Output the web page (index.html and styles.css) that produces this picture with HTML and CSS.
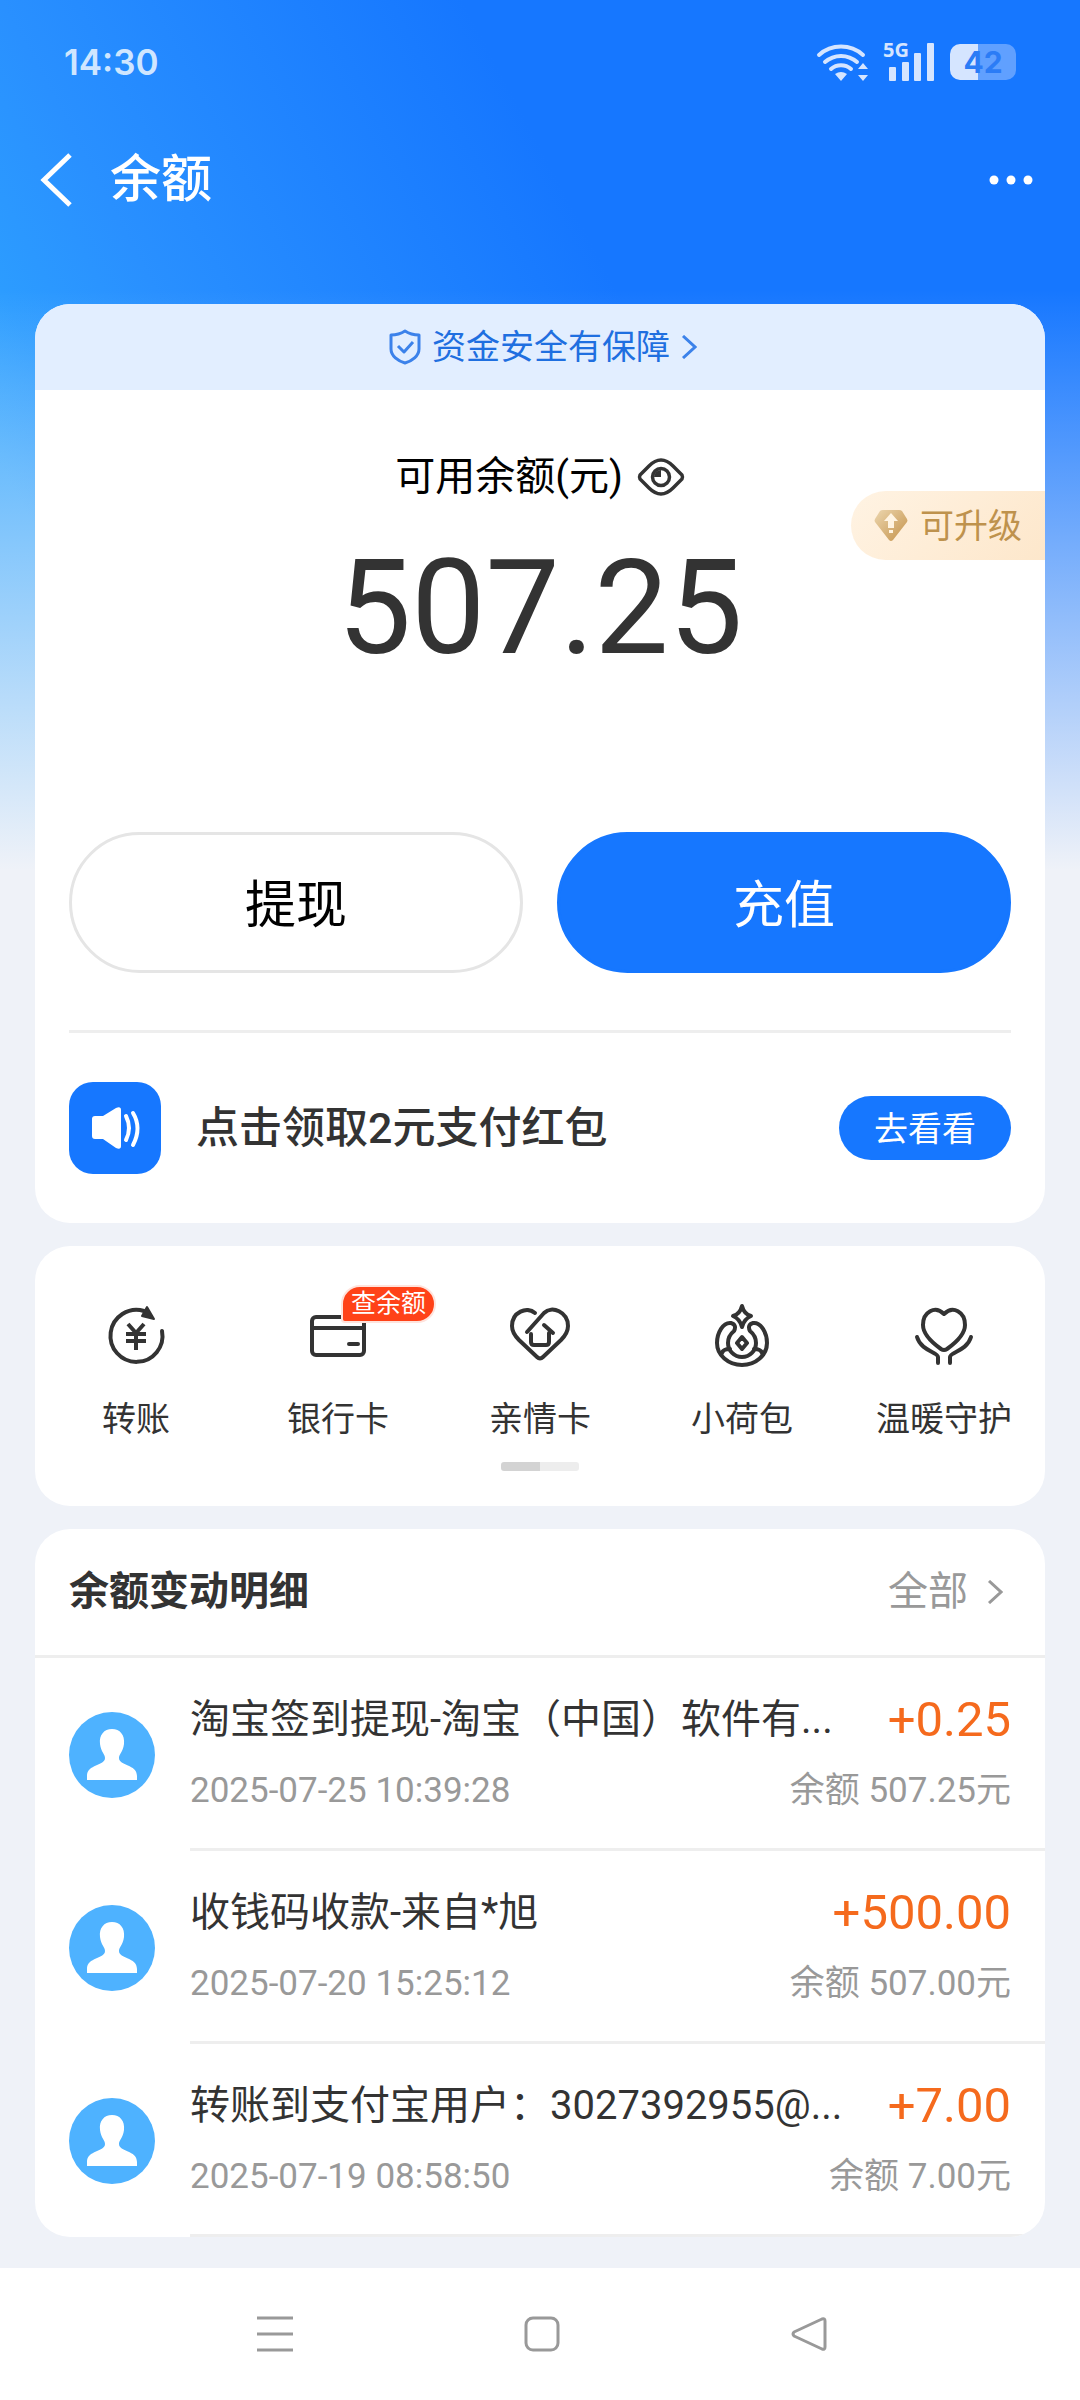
FILE: index.html
```html
<!DOCTYPE html>
<html lang="zh-CN">
<head>
<meta charset="utf-8">
<meta name="viewport" content="width=device-width, initial-scale=1">
<title>余额</title>
<link rel="stylesheet" href="styles.css">
</head>
<body>
<div class="page">
  <div class="status-bar">
    <span class="status-time">14:30</span>
    <div class="status-icons">
      <svg class="wifi" viewBox="0 0 52 40" fill="none" stroke="#d5e5ff" stroke-width="4" stroke-linecap="round" aria-label="Wi-Fi">
        <path d="M3 13a33 33 0 0 1 44 0M9 20a24 24 0 0 1 32 0M15 27a15 15 0 0 1 20 0"/>
        <path d="M19 32q6-4 12 0l-6 7zM42 27l5-6 5 6zM42 33h10l-5 6z" fill="#d5e5ff" stroke="none"/>
      </svg>
      <div class="signal">
        <span class="network">5G</span>
        <svg viewBox="0 0 52 40" fill="#d5e5ff" aria-label="信号">
          <rect x="6" y="25" width="7" height="14" rx="1"/><rect x="19" y="20" width="7" height="19" rx="1"/><rect x="31" y="11" width="7" height="28" rx="1"/><rect x="44" y="1" width="7" height="38" rx="1"/>
        </svg>
      </div>
      <div class="battery"><span>42</span></div>
    </div>
  </div>

  <header class="title-bar">
    <button class="icon-button" type="button" aria-label="返回">
      <svg width="32" height="54" viewBox="0 0 32 54" fill="none" stroke="#fff" stroke-width="5"><path d="M30 2L4 27l26 25"/></svg>
    </button>
    <h1>余额</h1>
    <button class="icon-button more" type="button" aria-label="更多">
      <svg width="44" height="10" viewBox="0 0 44 10" fill="#fff"><circle cx="5" cy="5" r="4.5"/><circle cx="22" cy="5" r="4.5"/><circle cx="39" cy="5" r="4.5"/></svg>
    </button>
  </header>

  <main>
    <section class="card balance-card">
      <a class="safety" href="#">
        <svg width="32" height="36" viewBox="0 0 32 36" fill="none" stroke="#3c82ea" stroke-width="3" stroke-linejoin="round"><path d="M16 2q6 4 14 4v14c0 7-7 12-14 14C9 32 2 27 2 20V6q8 0 14-4z"/><path d="M9 17l6 6 9-10"/></svg>
        <span>资金安全有保障</span>
        <svg width="16" height="24" viewBox="0 0 16 24" fill="none" stroke="#3c82ea" stroke-width="3"><path d="M2 1l12 11L2 23"/></svg>
      </a>
      <div class="balance">
        <div class="balance-label">
          <span>可用余额(元)</span>
          <button class="icon-button" type="button" aria-label="隐藏余额">
            <svg width="48" height="38" viewBox="0 0 48 38" fill="none" stroke="#333" stroke-width="3.5"><path d="M3 17L12 8Q18 2 24 2t12 6l9 9q1 2 0 4l-9 9q-6 6-12 6t-12-6l-9-9q-1-2 0-4z"/><circle cx="24" cy="19" r="8.500"/><path d="M24 12v7h-7a7 7 0 0 1 7-7z" fill="#333" stroke="none"/></svg>
          </button>
        </div>
        <strong class="balance-amount">507.25</strong>
        <a class="upgrade" href="#">
          <svg width="34" height="33" viewBox="0 0 34 33"><defs><linearGradient id="gem" x1="0" y1="0" x2="1" y2="1"><stop offset="0" stop-color="#ecd6ae"/><stop offset="1" stop-color="#c4924a"/></linearGradient></defs><path d="M9 1h16q2 0 3 1l5 8q1 2 0 3L19 31q-2 2-4 0L1 13q-1-1 0-3l5-8q1-1 3-1z" fill="url(#gem)"/><path d="M17 4l7 8h-4v7h-6v-7h-4zM15 21h4v3h-4z" fill="#fff4e2"/></svg>
          <span>可升级</span>
        </a>
      </div>
      <div class="actions">
        <button class="action" type="button">提现</button>
        <button class="action primary" type="button">充值</button>
      </div>
      <div class="promo">
        <span class="promo-icon">
          <svg width="92" height="92" viewBox="0 0 92 92"><path d="M26 34h8l13-8q5-2 5 2v36q0 4-5 2l-13-9h-8q-3 0-3-3V37q0-3 3-3z" fill="#fff"/><path d="M57 34q6 12 0 24M64 31q9 15 0 32" fill="none" stroke="#fff" stroke-width="4" stroke-linecap="round"/></svg>
        </span>
        <span class="promo-text">点击领取2元支付红包</span>
        <button class="promo-button" type="button">去看看</button>
      </div>
    </section>

    <section class="card services">
      <nav class="service-list" aria-label="服务">
        <a class="service" href="#">
          <svg viewBox="0 0 64 64"><path d="M40 8A26 26 0 1 0 58 28"/><path d="M43 4l7 12-12-3z" fill="#333" stroke-width="2"/><path d="M24 21l8 9 8-9M22 31h20M22 38h20M32 30v17" stroke-linecap="butt"/></svg>
          <span>转账</span>
        </a>
        <a class="service" href="#">
          <svg viewBox="0 0 64 64"><rect x="6" y="14" width="52" height="38" rx="4"/><path d="M6 25h52M43 41h9"/></svg>
          <span>银行卡</span>
          <em class="badge">查余额</em>
        </a>
        <a class="service" href="#">
          <svg viewBox="0 0 64 64"><path d="M27 10C19 3 4 9 4 23c0 6 3 10 7 14l18 17q3 3 6 0l18-17c4-4 7-8 7-14C60 9 44 2 36 10L19 29"/><path d="M36 22l9 8M23 31v8q0 3 3 3h12q3 0 3-3V30"/></svg>
          <span>亲情卡</span>
        </a>
        <a class="service" href="#">
          <svg viewBox="0 0 64 64"><path d="M32 3q2 8 9 10-7 3-9 11-2-8-9-11 7-2 9-10z"/><path d="M21 20c-8-1-14 10-14 20a25 22 0 0 0 50 0c0-10-6-21-14-20-4 1-5 4-3 8 5 4 6 8 6 12a14 14 0 0 1-28 0c0-4 1-8 6-12 2-4 1-7-3-8z"/><path d="M12 50q1-4 8-4M52 50q-1-4-8-4M32 34l5 6-5 6-5-6z"/></svg>
          <span>小荷包</span>
        </a>
        <a class="service" href="#">
          <svg viewBox="0 0 64 64"><path d="M32 11c-9-9-21-2-21 11 0 10 11 19 18 24q3 2 6 0c7-5 18-14 18-24C53 9 41 2 32 11z"/><path d="M5 34c4 14 21 15 21 20v6M59 34c-4 14-21 15-21 20v6"/></svg>
          <span>温暖守护</span>
        </a>
      </nav>
      <div class="pager"></div>
    </section>

    <section class="card records">
      <div class="records-head">
        <h2>余额变动明细</h2>
        <a class="all" href="#">全部
          <svg width="16" height="24" viewBox="0 0 16 24" fill="none" stroke="#999" stroke-width="3"><path d="M2 1l12 11L2 23"/></svg>
        </a>
      </div>
      <ul class="record-list">
        <li class="record">
          <svg class="avatar" viewBox="0 0 86 86"><circle cx="43" cy="43" r="43" fill="#4eb2ff"/><path d="M43 17c8 0 13 6 12 15-1 8-5 10-5 14 0 8 18 6 18 18v4H18v-4c0-12 18-10 18-18 0-4-4-6-5-14-1-9 4-15 12-15z" fill="#fff"/></svg>
          <div class="record-body">
            <div class="record-line"><span class="record-name">淘宝签到提现-淘宝（中国）软件有...</span><span class="record-amount">+0.25</span></div>
            <div class="record-line meta"><time>2025-07-25 10:39:28</time><span>余额 507.25元</span></div>
          </div>
        </li>
        <li class="record">
          <svg class="avatar" viewBox="0 0 86 86"><circle cx="43" cy="43" r="43" fill="#4eb2ff"/><path d="M43 17c8 0 13 6 12 15-1 8-5 10-5 14 0 8 18 6 18 18v4H18v-4c0-12 18-10 18-18 0-4-4-6-5-14-1-9 4-15 12-15z" fill="#fff"/></svg>
          <div class="record-body">
            <div class="record-line"><span class="record-name">收钱码收款-来自*旭</span><span class="record-amount">+500.00</span></div>
            <div class="record-line meta"><time>2025-07-20 15:25:12</time><span>余额 507.00元</span></div>
          </div>
        </li>
        <li class="record">
          <svg class="avatar" viewBox="0 0 86 86"><circle cx="43" cy="43" r="43" fill="#4eb2ff"/><path d="M43 17c8 0 13 6 12 15-1 8-5 10-5 14 0 8 18 6 18 18v4H18v-4c0-12 18-10 18-18 0-4-4-6-5-14-1-9 4-15 12-15z" fill="#fff"/></svg>
          <div class="record-body">
            <div class="record-line"><span class="record-name">转账到支付宝用户：3027392955@...</span><span class="record-amount">+7.00</span></div>
            <div class="record-line meta"><time>2025-07-19 08:58:50</time><span>余额 7.00元</span></div>
          </div>
        </li>
      </ul>
    </section>
  </main>

  <nav class="system-nav" aria-label="系统导航">
    <button class="icon-button" type="button" aria-label="最近任务"><svg width="36" height="36" viewBox="0 0 36 36" fill="none" stroke="#999" stroke-width="3"><path d="M0 2h36M0 18h36M0 34h36"/></svg></button>
    <button class="icon-button" type="button" aria-label="主屏幕"><svg width="36" height="36" viewBox="0 0 36 36" fill="none" stroke="#999" stroke-width="3"><rect x="2" y="2" width="32" height="32" rx="7"/></svg></button>
    <button class="icon-button" type="button" aria-label="返回上一页"><svg width="36" height="36" viewBox="0 0 36 36" fill="none" stroke="#999" stroke-width="3" stroke-linejoin="round"><path d="M31 3L3 16q-2 2 0 4l28 13q3 1 3-2V5q0-3-3-2z"/></svg></button>
  </nav>
</div>
</body>
</html>
```
FILE: styles.css
```css
* {
  box-sizing: border-box;
}

body {
  margin: 0;
  background: #eff2f8;
  color: #333;
  font-family: Roboto, "Noto Sans CJK SC", sans-serif;
  font-size: 34px;
  line-height: 48px;
}

h1, h2, ul {
  margin: 0;
  padding: 0;
}

a {
  color: inherit;
  text-decoration: none;
}

button {
  margin: 0;
  padding: 0;
  border: 0;
  background: none;
  color: inherit;
  font: inherit;
  cursor: pointer;
}

svg {
  display: block;
  flex: none;
}

.icon-button {
  display: flex;
  align-items: center;
  justify-content: center;
}

.page {
  display: flex;
  flex-direction: column;
  min-height: 100vh;
  background-image:
    linear-gradient(to bottom, rgba(239, 242, 248, 0) 290px, #eff2f8 870px),
    linear-gradient(62deg, #34a6ff 14%, #2c9cff 20%, #2990ff 30%, #1677ff 60%);
  background-size: 100% 870px;
  background-repeat: no-repeat;
}

/* Status bar */

.status-bar {
  display: flex;
  align-items: center;
  justify-content: space-between;
  height: 124px;
  padding: 0 64px;
}

.status-time {
  color: #cfe6ff;
  font-family: Inter, sans-serif;
  font-size: 35px;
  font-weight: 600;
}

.status-icons {
  display: flex;
  align-items: center;
  gap: 15px;
}

.wifi {
  width: 52px;
  height: 40px;
}

.signal {
  position: relative;
}

.signal svg {
  width: 52px;
  height: 40px;
}

.network {
  position: absolute;
  left: 0;
  top: 0;
  color: #d5e5ff;
  font-family: "Noto Sans", sans-serif;
  font-size: 20px;
  font-weight: 700;
  line-height: 16px;
}

.battery {
  width: 66px;
  height: 36px;
  border-radius: 10px;
  background: linear-gradient(90deg, #d5e5ff 28px, #60a0ff 28px);
  color: #2b7cf6;
  font-family: Inter, sans-serif;
  font-size: 30px;
  font-weight: 700;
  line-height: 36px;
  text-align: center;
}

/* Title bar */

.title-bar {
  display: flex;
  align-items: center;
  height: 112px;
  margin-bottom: 68px;
  padding: 0 47px 0 40px;
  color: #fff;
}

.title-bar h1 {
  margin-left: 38px;
  font-size: 51px;
  font-weight: 500;
  line-height: 72px;
}

.more {
  margin-left: auto;
}

/* Cards */

main {
  display: flex;
  flex-direction: column;
  gap: 23px;
  padding: 0 35px 31px;
}

.card {
  overflow: hidden;
  border-radius: 35px;
  background: #fff;
}

.safety {
  display: flex;
  align-items: center;
  justify-content: center;
  gap: 11px;
  height: 86px;
  padding-left: 6px;
  background: #e2eeff;
  color: #1f6fe0;
}

.balance {
  position: relative;
  display: flex;
  flex-direction: column;
  align-items: center;
  height: 442px;
  padding-top: 59px;
}

.balance-label {
  display: flex;
  align-items: center;
  gap: 14px;
  color: #000;
  font-size: 40px;
  line-height: 56px;
}

.balance-amount {
  margin-top: 26px;
  font-size: 132px;
  font-weight: 400;
  line-height: 154px;
}

.upgrade {
  position: absolute;
  top: 101px;
  right: 0;
  display: flex;
  align-items: center;
  gap: 12px;
  height: 69px;
  padding: 0 23px;
  border-radius: 35px 0 0 35px;
  background: linear-gradient(135deg, #fff3e3, #fde7cb);
  color: #be924d;
}

.actions {
  display: grid;
  grid-template-columns: 1fr 1fr;
  gap: 34px;
  padding: 0 34px 57px;
}

.action {
  height: 141px;
  padding-top: 6px;
  border: 3px solid #e5e5e5;
  border-radius: 71px;
  color: #000;
  font-size: 51px;
  line-height: 72px;
}

.action.primary {
  border-color: #1677ff;
  background: #1677ff;
  color: #fff;
}

.promo {
  display: flex;
  align-items: center;
  margin: 0 34px;
  padding: 49px 0;
  border-top: 3px solid #eee;
}

.promo-icon {
  overflow: hidden;
  border-radius: 24px;
  background: #1677ff;
}

.promo-text {
  margin-left: 35px;
  font-size: 43px;
  font-weight: 500;
  line-height: 60px;
}

.promo-button {
  width: 172px;
  height: 64px;
  margin-left: auto;
  padding-top: 2px;
  border-radius: 32px;
  background: #1677ff;
  color: #fff;
}

/* Services */

.services {
  padding: 57px 0 35px;
}

.service-list {
  display: grid;
  grid-template-columns: repeat(5, 1fr);
}

.service {
  position: relative;
  display: flex;
  flex-direction: column;
  align-items: center;
  gap: 28px;
}

.service svg {
  width: 64px;
  height: 64px;
  fill: none;
  stroke: #333;
  stroke-width: 4;
  stroke-linecap: round;
  stroke-linejoin: round;
}

.badge {
  position: absolute;
  left: 50%;
  top: -18px;
  margin-left: 3px;
  padding: 0 8px;
  border: 2px solid #ffe3dc;
  border-radius: 20px 20px 20px 4px;
  background: #ff4218;
  color: #fff;
  font-size: 25px;
  font-style: normal;
  line-height: 34px;
}

.pager {
  width: 78px;
  height: 9px;
  margin: 19px auto 0;
  border-radius: 3px;
  background: linear-gradient(90deg, #d3d3d3 50%, #ededed 50%);
}

/* Records */

.records-head {
  display: flex;
  align-items: center;
  justify-content: space-between;
  height: 129px;
  padding: 0 42px 0 34px;
  border-bottom: 3px solid #eee;
  font-size: 40px;
  line-height: 56px;
}

.records-head h2 {
  font-size: 40px;
  font-weight: 700;
}

.all {
  display: flex;
  align-items: center;
  gap: 19px;
  color: #999;
}

.record-list {
  list-style: none;
}

.record {
  display: flex;
  align-items: center;
  gap: 35px;
  padding-left: 34px;
}

.avatar {
  width: 86px;
  height: 86px;
}

.record-body {
  display: flex;
  flex: 1;
  flex-direction: column;
  gap: 19px;
  min-width: 0;
  padding: 34px 34px 33px 0;
  border-bottom: 3px solid #eee;
}

.record-line {
  display: flex;
  align-items: center;
  justify-content: space-between;
  font-size: 40px;
  line-height: 56px;
  white-space: nowrap;
}

.record-amount {
  color: #f56a1d;
  font-size: 49px;
}

.record-line.meta {
  color: #999;
  font-size: 35px;
  line-height: 48px;
}

/* System navigation */

.system-nav {
  display: flex;
  align-items: center;
  justify-content: space-between;
  flex: 1;
  min-height: 132px;
  padding: 0 253px 0 257px;
  background: #fff;
}
```
